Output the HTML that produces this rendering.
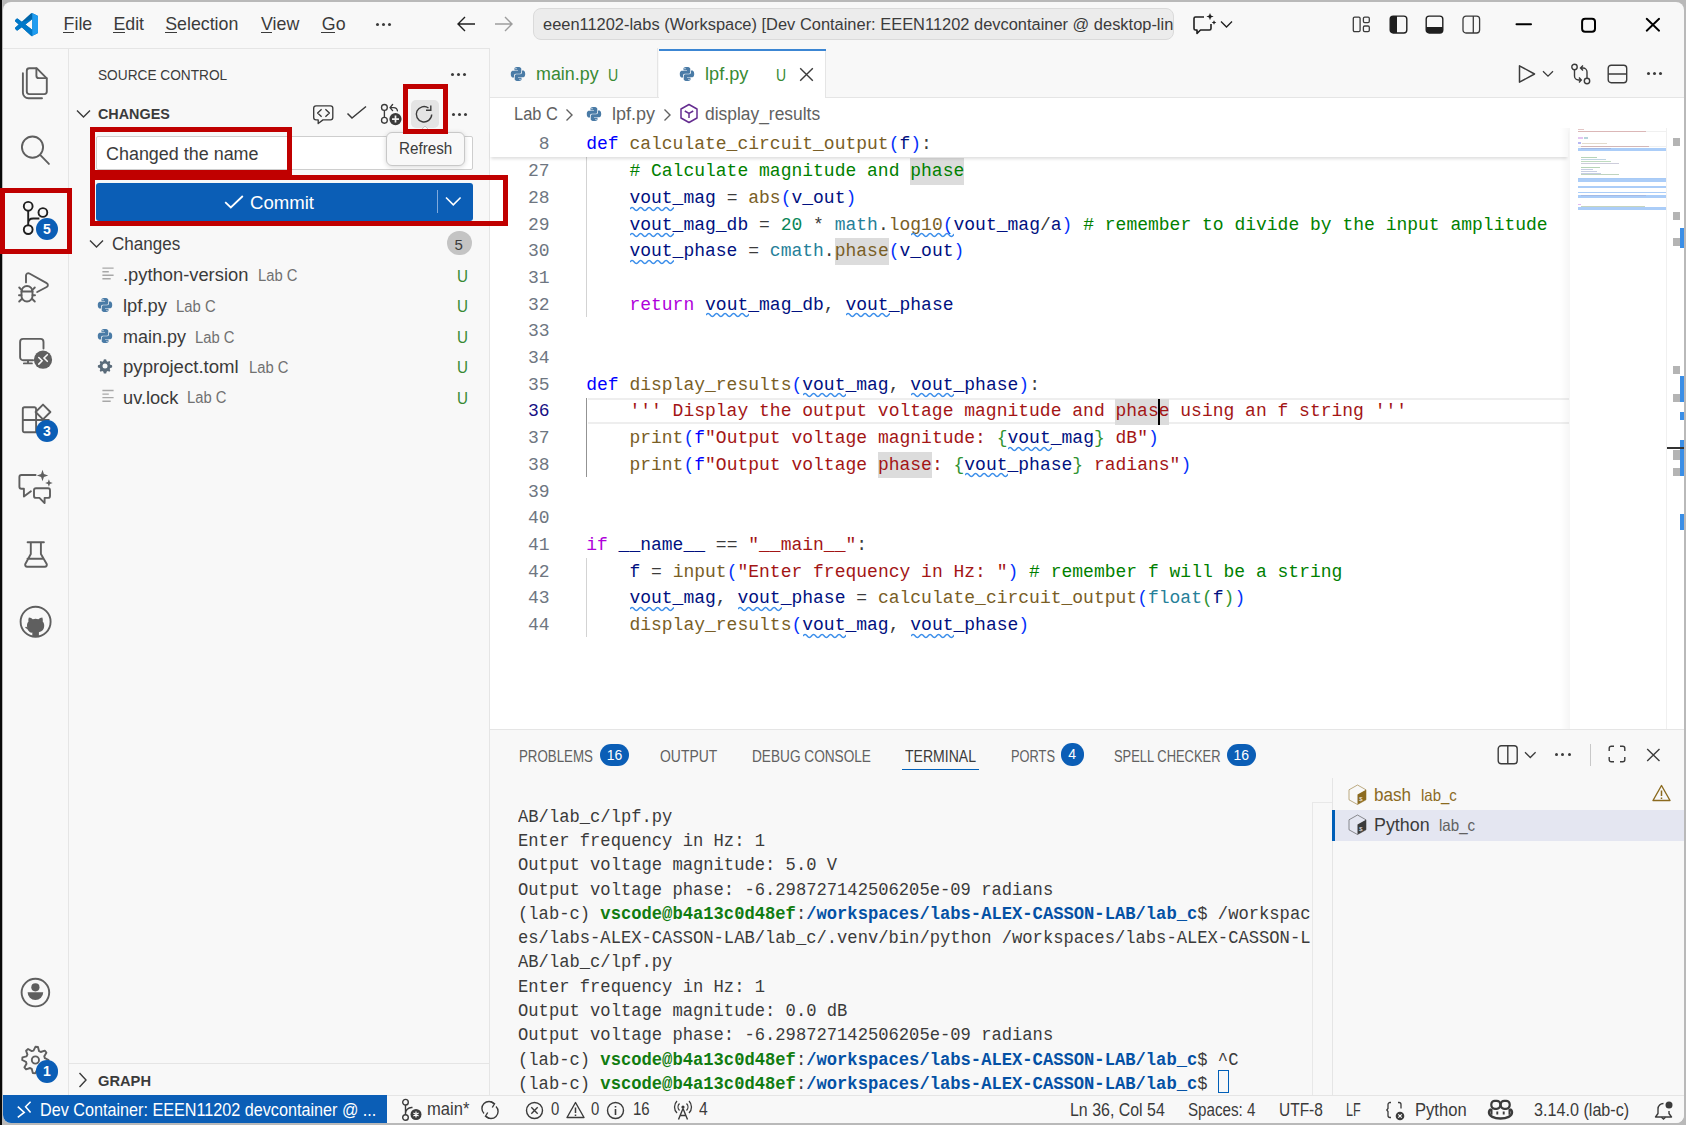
<!DOCTYPE html><html><head><meta charset="utf-8"><style>
*{box-sizing:border-box;margin:0;padding:0}
html,body{width:1686px;height:1125px;overflow:hidden;background:#b9b9b9;font-family:'Liberation Sans', sans-serif;}
.a{position:absolute}
.t{position:absolute;white-space:pre;line-height:1}
.win{position:absolute;left:3px;top:2px;width:1681px;height:1121px;background:#f8f8f8;border-radius:8px;overflow:hidden}
.code{position:absolute;white-space:pre;font-family:'Liberation Mono', monospace;font-size:18px;line-height:26.7px;color:#3b3b3b}
.ln{position:absolute;white-space:pre;font-family:'Liberation Mono', monospace;font-size:18px;line-height:26.7px;color:#6e7681;text-align:right;width:60px;left:490px}
.kw{color:#0000ff} .fn{color:#795e26} .vr{color:#001080} .cm{color:#008000} .st{color:#a31515}
.nu{color:#098658} .ct{color:#af00db} .ty{color:#267f99} .b1{color:#0431fa} .b2{color:#319331}
.hl{background:#dcdcdc}
.sq{text-decoration:underline wavy #1a85ff;text-decoration-thickness:1px;text-underline-offset:4px;text-decoration-skip-ink:none}
.term{position:absolute;white-space:pre;font-family:'Liberation Mono', monospace;font-size:17.15px;line-height:24.27px;color:#3b3b3b;left:518px}
.tg{color:#107c10;font-weight:bold} .tb{color:#0451a5;font-weight:bold}
.ui{font-family:'Liberation Sans', sans-serif;color:#3b3b3b}
.badge{position:absolute;background:#0b5eb6;color:#fff;border-radius:11px;font-family:'Liberation Sans', sans-serif;font-weight:bold;text-align:center}
.red{position:absolute;border:5px solid #c00000;z-index:50}
svg{position:absolute;overflow:visible}
</style></head><body>
<div class="a" style="left:0;top:0;width:2px;height:1125px;background:#0a0a0a"></div>
<div class="win">
<div class="a" style="left:-3px;top:-2px;width:1686px;height:1125px">
<div class="a" style="left:0;top:48px;width:1686px;height:1px;background:#e5e5e5"></div>
<svg style="left:15px;top:12.8px;" width="23" height="23" viewBox="0 0 100 100"><path fill="#0065a9" d="M96.46 10.8 75.86.87a6.23 6.23 0 0 0-7.1 1.21L29.35 38.04 12.19 25.01a4.16 4.16 0 0 0-5.32.24L1.36 30.26a4.17 4.17 0 0 0 0 6.16L16.25 50 1.36 63.58a4.17 4.17 0 0 0 0 6.16l5.51 5.01a4.16 4.16 0 0 0 5.32.24l17.16-13.03 39.41 35.96a6.23 6.23 0 0 0 7.1 1.21l20.6-9.92A6.25 6.25 0 0 0 100 83.59V16.41a6.25 6.25 0 0 0-3.54-5.61zM75.01 72.7 45.11 50l29.9-22.7z"/>
<path fill="#007acc" d="M29.35 38.04 12.19 25.01a4.16 4.16 0 0 0-5.32.24L1.36 30.26a4.17 4.17 0 0 0 0 6.16L16.25 50 1.36 63.58a4.17 4.17 0 0 0 0 6.16l5.51 5.01a4.16 4.16 0 0 0 5.32.24l17.16-13.03 45.66 41.66L75.01 72.7 45.11 50l29.9-22.7z" opacity=".9"/>
<path fill="#1f9cf0" d="M75.86.87a6.23 6.23 0 0 0-7.1 1.21L75 0v100l.86-.87 20.6-9.92A6.25 6.25 0 0 0 100 83.59V16.41a6.25 6.25 0 0 0-3.54-5.61z"/></svg>
<div class="t" style="left:63.60px;top:15.73px;font-size:17.8px;color:#3b3b3b;font-family:'Liberation Sans', sans-serif;">File</div>
<div class="a" style="left:63.1px;top:32px;width:10.9px;height:1.3px;background:#3b3b3b"></div>
<div class="t" style="left:113.40px;top:15.73px;font-size:17.8px;color:#3b3b3b;font-family:'Liberation Sans', sans-serif;">Edit</div>
<div class="a" style="left:112.9px;top:32px;width:11.9px;height:1.3px;background:#3b3b3b"></div>
<div class="t" style="left:165.20px;top:15.73px;font-size:17.8px;color:#3b3b3b;font-family:'Liberation Sans', sans-serif;">Selection</div>
<div class="a" style="left:164.7px;top:32px;width:11.9px;height:1.3px;background:#3b3b3b"></div>
<div class="t" style="left:261.00px;top:15.73px;font-size:17.8px;color:#3b3b3b;font-family:'Liberation Sans', sans-serif;">View</div>
<div class="a" style="left:260.5px;top:32px;width:11.9px;height:1.3px;background:#3b3b3b"></div>
<div class="t" style="left:321.80px;top:15.73px;font-size:17.8px;color:#3b3b3b;font-family:'Liberation Sans', sans-serif;">Go</div>
<div class="a" style="left:321.3px;top:32px;width:13.8px;height:1.3px;background:#3b3b3b"></div>
<div class="a" style="left:375.5px;top:22.5px;width:3px;height:3px;border-radius:50%;background:#3b3b3b"></div>
<div class="a" style="left:381.5px;top:22.5px;width:3px;height:3px;border-radius:50%;background:#3b3b3b"></div>
<div class="a" style="left:387.5px;top:22.5px;width:3px;height:3px;border-radius:50%;background:#3b3b3b"></div>
<svg style="left:457px;top:16px;" width="19" height="16" viewBox="0 0 19 16"><path d="M1 8H18M8 1 1 8l7 7" fill="none" stroke="#1f1f1f" stroke-width="1.4"/></svg>
<svg style="left:493.5px;top:16px;" width="19" height="16" viewBox="0 0 19 16"><path d="M1 8H18M11 1l7 7-7 7" fill="none" stroke="#9d9d9d" stroke-width="1.4"/></svg>
<div class="a" style="left:532.5px;top:7.7px;width:641px;height:32px;background:#ececec;border:1px solid #dadada;border-radius:8px;overflow:hidden">
<div class="t" style="left:9px;top:8.38px;font-size:16.8px;color:#3b3b3b;transform:scaleX(0.9789);transform-origin:0 0">eeen11202-labs (Workspace) [Dev Container: EEEN11202 devcontainer @ desktop-linux]</div>
</div>
<svg style="left:1191px;top:12px;" width="26" height="24" viewBox="0 0 26 24"><path d="M13 5H4.5A1.5 1.5 0 0 0 3 6.5v10A1.5 1.5 0 0 0 4.5 18H6v3.5L9.5 18H18.5A1.5 1.5 0 0 0 20 16.5V12" fill="none" stroke="#1f1f1f" stroke-width="1.6" stroke-linejoin="round"/><path d="M19 1l1 2.6L22.6 4.6 20 5.6 19 8.2 18 5.6 15.4 4.6 18 3.6z M23 8.2l.7 1.6 1.6.7-1.6.7-.7 1.6-.7-1.6-1.6-.7 1.6-.7z" fill="#1f1f1f"/></svg>
<svg style="left:1220px;top:20px;" width="13" height="9" viewBox="0 0 13 9"><path d="M1 1.5l5.5 5.5L12 1.5" fill="none" stroke="#1f1f1f" stroke-width="1.3"/></svg>
<svg style="left:1352px;top:16px;" width="19" height="17" viewBox="0 0 19 17"><rect x="1.3" y="1.1" width="6.8" height="14.5" rx="1.3" fill="none" stroke="#3b3b3b" stroke-width="1.3"/><rect x="11.4" y="1.1" width="5.9" height="5.5" rx="1.3" fill="none" stroke="#3b3b3b" stroke-width="1.3"/><rect x="11.4" y="10" width="5.9" height="5.6" rx="1.3" fill="none" stroke="#3b3b3b" stroke-width="1.3"/></svg>
<svg style="left:1389px;top:15px;" width="19" height="19" viewBox="0 0 19 19"><rect x="1.2" y="1.1" width="16.6" height="16.9" rx="3" fill="none" stroke="#1f1f1f" stroke-width="1.4"/><path d="M4 1.1H8V18H4A2.8 2.8 0 0 1 1.2 15.2V3.9A2.8 2.8 0 0 1 4 1.1z" fill="#1f1f1f"/></svg>
<svg style="left:1425px;top:15px;" width="19" height="19" viewBox="0 0 19 19"><rect x="1.2" y="1.1" width="16.6" height="16.9" rx="3" fill="none" stroke="#1f1f1f" stroke-width="1.4"/><path d="M1.2 12H17.8V15.2A2.8 2.8 0 0 1 15 18H4A2.8 2.8 0 0 1 1.2 15.2z" fill="#1f1f1f"/></svg>
<svg style="left:1462px;top:15px;" width="19" height="19" viewBox="0 0 19 19"><rect x="1" y="1.1" width="16.6" height="16.9" rx="3" fill="none" stroke="#3b3b3b" stroke-width="1.3"/><path d="M11.3 1.1V18" stroke="#3b3b3b" stroke-width="1.3"/></svg>
<svg style="left:1500px;top:0" width="186" height="48"><path d="M1516.5 24.2H1531" transform="translate(-1500,0)" stroke="#000" stroke-width="2" stroke-linecap="round"/><rect x="82.1" y="18.8" width="12.9" height="12.9" rx="3" fill="none" stroke="#000" stroke-width="2"/><path d="M146.7 18.8 159.1 30.7 M159.1 18.8 146.7 30.7" stroke="#000" stroke-width="1.9" stroke-linecap="round"/></svg>
<div class="a" style="left:68px;top:48px;width:1px;height:1047px;background:#e5e5e5"></div>
<svg style="left:0;top:0" width="70" height="1125">
<g fill="none" stroke="#5f5f5f" stroke-width="1.9" stroke-linejoin="round" stroke-linecap="round">
 <path d="M29.3 68.2h7.3l10.2 10.2v13.2a2.5 2.5 0 0 1-2.5 2.5H29.3a2.5 2.5 0 0 1-2.5-2.5V70.7a2.5 2.5 0 0 1 2.5-2.5z"/>
 <path d="M36.4 68.4v7.3a2.4 2.4 0 0 0 2.4 2.4h7.8"/>
 <path d="M22.9 73.2v19.5a5.6 5.6 0 0 0 5.6 5.6h13.5"/>
 <circle cx="32.5" cy="147.1" r="10.6"/>
 <path d="M40.4 155.2 48.9 163.9"/>
</g>
<g fill="none" stroke="#1f1f1f" stroke-width="1.9">
 <circle cx="28.2" cy="206.3" r="4.4"/>
 <circle cx="42.9" cy="212.5" r="4.4"/>
 <circle cx="28.2" cy="229.6" r="4.4"/>
 <path d="M28.2 210.7V225.2 M28.2 223.5c0-3.2 1.8-5 5-5h6.2"/>
</g>
<g fill="none" stroke="#5f5f5f" stroke-width="1.9" stroke-linejoin="round" stroke-linecap="round">
 <path d="M26 282.4V275.5a2.3 2.3 0 0 1 3.4-2l17.3 9.6a2.2 2.2 0 0 1 0 3.9L37.2 292"/>
 <path d="M21.5 291.5a5.5 5.5 0 0 1 11 0"/>
 <path d="M21.5 291.5v4.5a5.5 5.5 0 0 0 11 0v-4.5z"/>
 <path d="M19.2 287.5 22 290.3 M34.8 287.5 32 290.3 M19 295.2h2.5 M32.5 295.2H35 M19.2 301.5 22 298.8 M34.8 301.5 32 298.8"/>
 <path d="M43.5 348.5v-6.6a3 3 0 0 0-3-3H23.1a3 3 0 0 0-3 3v15.3a3 3 0 0 0 3 3h10 M28 360.3v3.1 M23.9 363.4h8"/>
</g>
<circle cx="43" cy="359.7" r="9.1" fill="#5f5f5f"/>
<path d="M38.8 357.5l3.3 3.3-3.3 3.3 M47.3 354.7l-3.3 3.3 3.3 3.3" fill="none" stroke="#f8f8f8" stroke-width="1.6" stroke-linecap="round"/>
<g fill="none" stroke="#5f5f5f" stroke-width="1.9" stroke-linejoin="round" stroke-linecap="round">
 <path d="M24.5 407.3h10a1.7 1.7 0 0 1 1.6 1.7v23.3H24.5a1.7 1.7 0 0 1-1.7-1.7V409a1.7 1.7 0 0 1 1.7-1.7z M22.8 420h26 M36.1 432.3h12"/>
 <path d="M43 404.6l7.4 7.4-7.4 7.4-7.4-7.4z"/>
 <path d="M35.6 475H21.4a2 2 0 0 0-2 2v9.8a2 2 0 0 0 2 2h2.5v7.8l7-5.3"/>
 <path d="M36 488.3h12a2 2 0 0 1 2 2v5.6a2 2 0 0 1-2 2h-3.4v5.2l-5.2-5.2H36a2 2 0 0 1-2-2v-5.6a2 2 0 0 1 2-2z"/>
 <path d="M27.6 542.3h16.3 M30.8 542.3v11.7L25.3 564a2 2 0 0 0 1.8 2.8h17.8a2 2 0 0 0 1.8-2.8L40.9 554V542.3 M27.5 558.8h16.2"/>
 <circle cx="35.6" cy="621.7" r="15"/>
 <circle cx="35.4" cy="992.6" r="13.8"/>
</g>
<path d="M42.5 469.8l1.4 4.3 4.3 1.4-4.3 1.4-1.4 4.3-1.4-4.3-4.3-1.4 4.3-1.4z M48.9 479.2l1 2.8 2.8 1-2.8 1-1 2.8-1-2.8-2.8-1 2.8-1z" fill="#5f5f5f"/>
<path d="M32.3 637v-4.8c-3.1-.6-5.3-2.4-5.3-6.6 0-1.6.6-3 1.5-4-.2-1-.3-2.6.4-4.1 1.6.1 3 .9 3.9 1.8a9.5 9.5 0 0 1 5.6 0c.9-.9 2.3-1.7 3.9-1.8.7 1.5.6 3.1.4 4.1.9 1 1.5 2.4 1.5 4 0 4.2-2.2 6-5.3 6.6V637z" fill="#5f5f5f"/>
<path d="M26 627.5c1.5.3 2.5 1.5 3.2 2.8.7 1.2 1.6 1.8 3 1.5" fill="none" stroke="#5f5f5f" stroke-width="1.5" stroke-linecap="round"/>
<circle cx="35.4" cy="987.3" r="4.1" fill="#5f5f5f"/>
<path d="M27.6 992.3h15.6a7.8 7.8 0 0 1-15.6 0z" fill="#5f5f5f"/>
</svg>
<svg style="left:0;top:0" width="70" height="1125"><polygon points="35.40,1046.80 37.98,1047.05 39.07,1051.13 40.73,1052.02 44.73,1050.67 46.38,1052.67 44.27,1056.33 44.82,1058.13 48.60,1060.00 48.35,1062.58 44.27,1063.67 43.38,1065.33 44.73,1069.33 42.73,1070.98 39.07,1068.87 37.27,1069.42 35.40,1073.20 32.82,1072.95 31.73,1068.87 30.07,1067.98 26.07,1069.33 24.42,1067.33 26.53,1063.67 25.98,1061.87 22.20,1060.00 22.45,1057.42 26.53,1056.33 27.42,1054.67 26.07,1050.67 28.07,1049.02 31.73,1051.13 33.53,1050.58" fill="none" stroke="#5f5f5f" stroke-width="1.9" stroke-linejoin="round"/><circle cx="35.4" cy="1060" r="3.6" fill="none" stroke="#5f5f5f" stroke-width="1.9"/></svg>
<div class="badge" style="left:35.8px;top:217.8px;width:22.4px;height:22.4px;font-size:14px;line-height:22.4px;border-radius:50%;border:0">5</div>
<div class="badge" style="left:35.6px;top:419.5px;width:22.4px;height:22.4px;font-size:14px;line-height:22.4px;border-radius:50%;border:0">3</div>
<div class="badge" style="left:35.7px;top:1060.4px;width:22.4px;height:22.4px;font-size:14px;line-height:22.4px;border-radius:50%;border:0">1</div>
<div class="a" style="left:489px;top:48px;width:1px;height:1047px;background:#e5e5e5"></div>
<div class="t" style="left:97.50px;top:67.48px;font-size:15.5px;color:#3b3b3b;font-family:'Liberation Sans', sans-serif;transform:scaleX(0.8825);transform-origin:0 0;">SOURCE CONTROL</div>
<div class="a" style="left:450.8px;top:72.8px;width:3px;height:3px;border-radius:50%;background:#3b3b3b"></div>
<div class="a" style="left:456.8px;top:72.8px;width:3px;height:3px;border-radius:50%;background:#3b3b3b"></div>
<div class="a" style="left:462.8px;top:72.8px;width:3px;height:3px;border-radius:50%;background:#3b3b3b"></div>
<svg style="left:76px;top:109px;" width="15" height="10" viewBox="0 0 15 10"><path d="M1 1.5l6.5 6.5L14 1.5" fill="none" stroke="#3b3b3b" stroke-width="1.4"/></svg>
<div class="t" style="left:97.50px;top:106.30px;font-size:15px;color:#3b3b3b;font-family:'Liberation Sans', sans-serif;font-weight:bold;transform:scaleX(0.9572);transform-origin:0 0;">CHANGES</div>
<svg style="left:0;top:0" width="500" height="140"><path d="M316 105.8h14.5a2.3 2.3 0 0 1 2.3 2.3v9.5a2.3 2.3 0 0 1-2.3 2.3H323l-4.8 3.6v-3.6H316a2.3 2.3 0 0 1-2.3-2.3v-9.5a2.3 2.3 0 0 1 2.3-2.3z M321.6 109.3 317.6 113l4 3.7 M325.4 109.3l4 3.7-4 3.7" fill="none" stroke="#3b3b3b" stroke-width="1.35" stroke-linejoin="round"/></svg>
<svg style="left:346px;top:105px;" width="22" height="16" viewBox="0 0 22 16"><path d="M1.5 8.5 6 13 20 1.5" fill="none" stroke="#3b3b3b" stroke-width="1.5"/></svg>
<svg style="left:0;top:0" width="500" height="140"><g fill="none" stroke="#3b3b3b" stroke-width="1.35"><circle cx="384.4" cy="107.4" r="2.9"/><circle cx="384.4" cy="120.3" r="2.9"/><path d="M384.4 110.3v7.1"/><path d="M392.6 104.5 390 107.6l2.6 3 M390.3 107.6h3.5a3.6 3.6 0 0 1 3.6 3.2" stroke-linecap="round" stroke-linejoin="round"/></g><circle cx="395.5" cy="119.1" r="6.1" fill="#3b3b3b"/><path d="M395.5 115.6v7 M392 119.1h7" stroke="#f0f0f0" stroke-width="1.7"/></svg>
<div class="a" style="left:411px;top:100px;width:28px;height:28px;border-radius:5px;background:#e4e4e4"></div>
<svg style="left:413px;top:103px;" width="23" height="22" viewBox="0 0 23 22"><path d="M18.7 11.5A7.7 7.7 0 1 1 15.5 5" fill="none" stroke="#3b3b3b" stroke-width="1.4"/><path d="M17.8 2.5v4.8h-4.8" fill="none" stroke="#3b3b3b" stroke-width="1.4"/></svg>
<div class="a" style="left:451.8px;top:112.8px;width:3px;height:3px;border-radius:50%;background:#3b3b3b"></div>
<div class="a" style="left:457.8px;top:112.8px;width:3px;height:3px;border-radius:50%;background:#3b3b3b"></div>
<div class="a" style="left:463.8px;top:112.8px;width:3px;height:3px;border-radius:50%;background:#3b3b3b"></div>
<div class="a" style="left:96px;top:135.7px;width:376.5px;height:34.5px;background:#fff;border:1px solid #cecece;border-radius:2px"></div>
<div class="t" style="left:106.00px;top:145.26px;font-size:18px;color:#3b3b3b;font-family:'Liberation Sans', sans-serif;transform:scaleX(0.9960);transform-origin:0 0;">Changed the name</div>
<div class="a" style="left:96px;top:183px;width:376.5px;height:37.5px;background:#0b5eb6;border-radius:3px"></div>
<div class="a" style="left:437px;top:190px;width:1px;height:23px;background:#7fa9dc"></div>
<svg style="left:445px;top:196px;" width="17" height="11" viewBox="0 0 17 11"><path d="M1 1.5l7.3 7.3L15.6 1.5" fill="none" stroke="#fff" stroke-width="1.6"/></svg>
<svg style="left:224px;top:195px;" width="20" height="14" viewBox="0 0 20 14"><path d="M1.2 7.2 6.8 12.5 18.8 1" fill="none" stroke="#fff" stroke-width="1.8"/></svg>
<div class="t" style="left:250.00px;top:193.84px;font-size:18.5px;color:#ffffff;font-family:'Liberation Sans', sans-serif;transform:scaleX(1.0044);transform-origin:0 0;">Commit</div>
<div class="a" style="left:386px;top:131.6px;width:79px;height:34.7px;background:#f8f8f8;border:1px solid #c8c8c8;border-radius:6px;box-shadow:0 1px 5px rgba(0,0,0,.16)"></div>
<div class="t" style="left:398.70px;top:140.21px;font-size:17px;color:#3b3b3b;font-family:'Liberation Sans', sans-serif;transform:scaleX(0.8954);transform-origin:0 0;">Refresh</div>
<svg style="left:418px;top:125px" width="14" height="8"><path d="M0.5 7.5 7 1l6.5 6.5" fill="#f8f8f8" stroke="#c8c8c8" stroke-width="1"/><rect x="0" y="7" width="14" height="2" fill="#f8f8f8"/></svg>
<svg style="left:89px;top:239px;" width="15" height="10" viewBox="0 0 15 10"><path d="M1 1.5l6.5 6.5L14 1.5" fill="none" stroke="#3b3b3b" stroke-width="1.4"/></svg>
<div class="t" style="left:111.80px;top:234.96px;font-size:18px;color:#3b3b3b;font-family:'Liberation Sans', sans-serif;transform:scaleX(0.9465);transform-origin:0 0;">Changes</div>
<div class="a" style="left:447px;top:231px;width:25px;height:24px;border-radius:12px;background:#c4c4c4"></div>
<div class="t" style="left:454.50px;top:236.80px;font-size:15px;color:#3b3b3b;font-family:'Liberation Sans', sans-serif;">5</div>
<svg style="left:0;top:0" width="130" height="420"><path d="M102.4 268.1h11.2 M102.4 271.7h6.4 M102.4 275.2h11.2 M102.4 278.8h8.3" stroke="#a8a8a8" stroke-width="1.4"/></svg>
<div class="t" style="left:123.00px;top:266.11px;font-size:18.3px;color:#3b3b3b;font-family:'Liberation Sans', sans-serif;transform:scaleX(1.0030);transform-origin:0 0;">.python-version</div>
<div class="t" style="left:257.50px;top:268.05px;font-size:16px;color:#717171;font-family:'Liberation Sans', sans-serif;transform:scaleX(0.9251);transform-origin:0 0;">Lab C</div>
<div class="t" style="left:457.00px;top:267.63px;font-size:16.5px;color:#388a34;font-family:'Liberation Sans', sans-serif;transform:scaleX(0.9231);transform-origin:0 0;">U</div>
<svg style="left:97px;top:297px;" width="16" height="16" viewBox="0 0 16 16"><g transform="scale(1)"><path d="M7.9 1C4.3 1 4.5 2.6 4.5 2.6v1.6h3.5v.5H3.1S.8 4.4.8 8s2 3.5 2 3.5h1.2V9.8s-.1-2 2-2h3.4s1.9 0 1.9-1.9V3S11.6 1 7.9 1zM6 2.1a.6.6 0 1 1 0 1.2.6.6 0 0 1 0-1.2z" fill="#4a7ba6"/><path d="M8.1 15c3.6 0 3.4-1.6 3.4-1.6v-1.6H8v-.5h4.9s2.3.3 2.3-3.3-2-3.5-2-3.5H12v1.7s.1 2-2 2H6.6s-1.9 0-1.9 1.9V13S4.4 15 8.1 15zm1.9-1.1a.6.6 0 1 1 0-1.2.6.6 0 0 1 0 1.2z" fill="#4a7ba6"/></g></svg>
<div class="t" style="left:123.00px;top:296.71px;font-size:18.3px;color:#3b3b3b;font-family:'Liberation Sans', sans-serif;transform:scaleX(1.0037);transform-origin:0 0;">lpf.py</div>
<div class="t" style="left:175.80px;top:298.65px;font-size:16px;color:#717171;font-family:'Liberation Sans', sans-serif;transform:scaleX(0.9275);transform-origin:0 0;">Lab C</div>
<div class="t" style="left:457.00px;top:298.23px;font-size:16.5px;color:#388a34;font-family:'Liberation Sans', sans-serif;transform:scaleX(0.9231);transform-origin:0 0;">U</div>
<svg style="left:97px;top:328px;" width="16" height="16" viewBox="0 0 16 16"><g transform="scale(1)"><path d="M7.9 1C4.3 1 4.5 2.6 4.5 2.6v1.6h3.5v.5H3.1S.8 4.4.8 8s2 3.5 2 3.5h1.2V9.8s-.1-2 2-2h3.4s1.9 0 1.9-1.9V3S11.6 1 7.9 1zM6 2.1a.6.6 0 1 1 0 1.2.6.6 0 0 1 0-1.2z" fill="#4a7ba6"/><path d="M8.1 15c3.6 0 3.4-1.6 3.4-1.6v-1.6H8v-.5h4.9s2.3.3 2.3-3.3-2-3.5-2-3.5H12v1.7s.1 2-2 2H6.6s-1.9 0-1.9 1.9V13S4.4 15 8.1 15zm1.9-1.1a.6.6 0 1 1 0-1.2.6.6 0 0 1 0 1.2z" fill="#4a7ba6"/></g></svg>
<div class="t" style="left:123.00px;top:327.81px;font-size:18.3px;color:#3b3b3b;font-family:'Liberation Sans', sans-serif;transform:scaleX(0.9832);transform-origin:0 0;">main.py</div>
<div class="t" style="left:195.00px;top:329.75px;font-size:16px;color:#717171;font-family:'Liberation Sans', sans-serif;transform:scaleX(0.9251);transform-origin:0 0;">Lab C</div>
<div class="t" style="left:457.00px;top:329.33px;font-size:16.5px;color:#388a34;font-family:'Liberation Sans', sans-serif;transform:scaleX(0.9231);transform-origin:0 0;">U</div>
<svg style="left:97px;top:358px;" width="16" height="16" viewBox="0 0 16 16"><path d="M8 1.2l1.2.2.4 1.7 1.1.6 1.7-.6.9.9-.6 1.7.6 1.1 1.7.4.2 1.2-.2 1.2-1.7.4-.6 1.1.6 1.7-.9.9-1.7-.6-1.1.6-.4 1.7-1.2.2-1.2-.2-.4-1.7-1.1-.6-1.7.6-.9-.9.6-1.7-.6-1.1-1.7-.4L.8 8.4 1 7.2l1.7-.4.6-1.1-.6-1.7.9-.9 1.7.6 1.1-.6.4-1.7z" fill="#5a6b7a"/><circle cx="8" cy="8" r="2.5" fill="#f8f8f8"/></svg>
<div class="t" style="left:123.00px;top:357.91px;font-size:18.3px;color:#3b3b3b;font-family:'Liberation Sans', sans-serif;transform:scaleX(1.0166);transform-origin:0 0;">pyproject.toml</div>
<div class="t" style="left:248.50px;top:359.85px;font-size:16px;color:#717171;font-family:'Liberation Sans', sans-serif;transform:scaleX(0.9251);transform-origin:0 0;">Lab C</div>
<div class="t" style="left:457.00px;top:359.43px;font-size:16.5px;color:#388a34;font-family:'Liberation Sans', sans-serif;transform:scaleX(0.9231);transform-origin:0 0;">U</div>
<svg style="left:0;top:0" width="130" height="420"><path d="M102.4 390.5h11.2 M102.4 394.1h6.4 M102.4 397.6h11.2 M102.4 401.2h8.3" stroke="#a8a8a8" stroke-width="1.4"/></svg>
<div class="t" style="left:123.00px;top:388.51px;font-size:18.3px;color:#3b3b3b;font-family:'Liberation Sans', sans-serif;transform:scaleX(0.9964);transform-origin:0 0;">uv.lock</div>
<div class="t" style="left:187.30px;top:390.45px;font-size:16px;color:#717171;font-family:'Liberation Sans', sans-serif;transform:scaleX(0.9251);transform-origin:0 0;">Lab C</div>
<div class="t" style="left:457.00px;top:390.03px;font-size:16.5px;color:#388a34;font-family:'Liberation Sans', sans-serif;transform:scaleX(0.9231);transform-origin:0 0;">U</div>
<div class="a" style="left:69px;top:1063px;width:420px;height:1px;background:#e5e5e5"></div>
<svg style="left:78px;top:1072px;" width="10" height="16" viewBox="0 0 10 16"><path d="M1.5 1l6.5 7-6.5 7" fill="none" stroke="#3b3b3b" stroke-width="1.4"/></svg>
<div class="t" style="left:97.50px;top:1072.80px;font-size:15px;color:#3b3b3b;font-family:'Liberation Sans', sans-serif;font-weight:bold;transform:scaleX(0.9784);transform-origin:0 0;">GRAPH</div>
<div class="a" style="left:490px;top:97px;width:1194px;height:632px;background:#ffffff"></div>
<div class="a" style="left:490px;top:48px;width:1194px;height:49px;background:#f8f8f8"></div>
<div class="a" style="left:490px;top:97px;width:1194px;height:1px;background:#e5e5e5"></div>
<div class="a" style="left:490px;top:48px;width:168px;height:49px;background:#f8f8f8;border-right:1px solid #e5e5e5"></div>
<div class="a" style="left:658.7px;top:48.5px;width:167.5px;height:49.5px;background:#ffffff;border-right:1px solid #e5e5e5"></div>
<div class="a" style="left:658.7px;top:49.2px;width:167.5px;height:1.6px;background:#3c86d3"></div>
<svg style="left:510px;top:66px;" width="16" height="16" viewBox="0 0 16 16"><g transform="scale(1)"><path d="M7.9 1C4.3 1 4.5 2.6 4.5 2.6v1.6h3.5v.5H3.1S.8 4.4.8 8s2 3.5 2 3.5h1.2V9.8s-.1-2 2-2h3.4s1.9 0 1.9-1.9V3S11.6 1 7.9 1zM6 2.1a.6.6 0 1 1 0 1.2.6.6 0 0 1 0-1.2z" fill="#4a7ba6"/><path d="M8.1 15c3.6 0 3.4-1.6 3.4-1.6v-1.6H8v-.5h4.9s2.3.3 2.3-3.3-2-3.5-2-3.5H12v1.7s.1 2-2 2H6.6s-1.9 0-1.9 1.9V13S4.4 15 8.1 15zm1.9-1.1a.6.6 0 1 1 0-1.2.6.6 0 0 1 0 1.2z" fill="#4a7ba6"/></g></svg>
<div class="t" style="left:535.90px;top:65.36px;font-size:18px;color:#388a34;font-family:'Liberation Sans', sans-serif;transform:scaleX(0.9932);transform-origin:0 0;">main.py</div>
<div class="t" style="left:607.80px;top:66.63px;font-size:16.5px;color:#388a34;font-family:'Liberation Sans', sans-serif;transform:scaleX(0.8560);transform-origin:0 0;">U</div>
<svg style="left:679px;top:66px;" width="16" height="16" viewBox="0 0 16 16"><g transform="scale(1)"><path d="M7.9 1C4.3 1 4.5 2.6 4.5 2.6v1.6h3.5v.5H3.1S.8 4.4.8 8s2 3.5 2 3.5h1.2V9.8s-.1-2 2-2h3.4s1.9 0 1.9-1.9V3S11.6 1 7.9 1zM6 2.1a.6.6 0 1 1 0 1.2.6.6 0 0 1 0-1.2z" fill="#4a7ba6"/><path d="M8.1 15c3.6 0 3.4-1.6 3.4-1.6v-1.6H8v-.5h4.9s2.3.3 2.3-3.3-2-3.5-2-3.5H12v1.7s.1 2-2 2H6.6s-1.9 0-1.9 1.9V13S4.4 15 8.1 15zm1.9-1.1a.6.6 0 1 1 0-1.2.6.6 0 0 1 0 1.2z" fill="#4a7ba6"/></g></svg>
<div class="t" style="left:704.60px;top:65.36px;font-size:18px;color:#388a34;font-family:'Liberation Sans', sans-serif;transform:scaleX(1.0088);transform-origin:0 0;">lpf.py</div>
<div class="t" style="left:776.40px;top:66.63px;font-size:16.5px;color:#388a34;font-family:'Liberation Sans', sans-serif;transform:scaleX(0.8476);transform-origin:0 0;">U</div>
<svg style="left:799px;top:67px;" width="15" height="15" viewBox="0 0 15 15"><path d="M1.2 1.2 13.8 13.8M13.8 1.2 1.2 13.8" stroke="#3b3b3b" stroke-width="1.4"/></svg>
<svg style="left:1517px;top:64px;" width="20" height="20" viewBox="0 0 20 20"><path d="M2.5 1.8 17.5 10 2.5 18.2z" fill="none" stroke="#3b3b3b" stroke-width="1.5" stroke-linejoin="round"/></svg>
<svg style="left:1542px;top:70px;" width="12" height="8" viewBox="0 0 12 8"><path d="M1 1.2l5 5 5-5" fill="none" stroke="#3b3b3b" stroke-width="1.3"/></svg>
<svg style="left:1570px;top:63px;" width="22" height="22" viewBox="0 0 22 22"><circle cx="4.5" cy="4" r="2.7" fill="none" stroke="#3b3b3b" stroke-width="1.4"/><circle cx="17" cy="18" r="2.7" fill="none" stroke="#3b3b3b" stroke-width="1.4"/><path d="M4.5 6.7V13a4 4 0 0 0 4 4H11 M9 14.5l2.3 2.5L9 19.5 M17 15.3V9a4 4 0 0 0-4-4h-2.5 M13 2.5 10.5 5 13 7.5" fill="none" stroke="#3b3b3b" stroke-width="1.4"/></svg>
<svg style="left:1607px;top:64px;" width="21" height="20" viewBox="0 0 21 20"><rect x="1.2" y="1.2" width="18.5" height="17.5" rx="3" fill="none" stroke="#3b3b3b" stroke-width="1.4"/><path d="M1.2 10h18.5" stroke="#3b3b3b" stroke-width="1.4"/></svg>
<div class="a" style="left:1646.8px;top:72.3px;width:3px;height:3px;border-radius:50%;background:#3b3b3b"></div>
<div class="a" style="left:1652.8px;top:72.3px;width:3px;height:3px;border-radius:50%;background:#3b3b3b"></div>
<div class="a" style="left:1658.8px;top:72.3px;width:3px;height:3px;border-radius:50%;background:#3b3b3b"></div>
<div class="t" style="left:513.70px;top:104.96px;font-size:18px;color:#616161;font-family:'Liberation Sans', sans-serif;transform:scaleX(0.9119);transform-origin:0 0;">Lab C</div>
<svg style="left:565px;top:108px;" width="9" height="14" viewBox="0 0 9 14"><path d="M1.5 1.5 7 7l-5.5 5.5" fill="none" stroke="#616161" stroke-width="1.4"/></svg>
<svg style="left:586px;top:106px;" width="16" height="16" viewBox="0 0 16 16"><g transform="scale(1)"><path d="M7.9 1C4.3 1 4.5 2.6 4.5 2.6v1.6h3.5v.5H3.1S.8 4.4.8 8s2 3.5 2 3.5h1.2V9.8s-.1-2 2-2h3.4s1.9 0 1.9-1.9V3S11.6 1 7.9 1zM6 2.1a.6.6 0 1 1 0 1.2.6.6 0 0 1 0-1.2z" fill="#4a7ba6"/><path d="M8.1 15c3.6 0 3.4-1.6 3.4-1.6v-1.6H8v-.5h4.9s2.3.3 2.3-3.3-2-3.5-2-3.5H12v1.7s.1 2-2 2H6.6s-1.9 0-1.9 1.9V13S4.4 15 8.1 15zm1.9-1.1a.6.6 0 1 1 0-1.2.6.6 0 0 1 0 1.2z" fill="#4a7ba6"/></g></svg>
<div class="t" style="left:612.00px;top:104.96px;font-size:18px;color:#616161;font-family:'Liberation Sans', sans-serif;transform:scaleX(0.9995);transform-origin:0 0;">lpf.py</div>
<svg style="left:663px;top:108px;" width="9" height="14" viewBox="0 0 9 14"><path d="M1.5 1.5 7 7l-5.5 5.5" fill="none" stroke="#616161" stroke-width="1.4"/></svg>
<svg style="left:679px;top:103px;" width="21" height="21" viewBox="0 0 21 21"><path d="M10 1.5l8 4.5v9l-8 4.5-8-4.5V6z" fill="none" stroke="#652d90" stroke-width="1.5" stroke-linejoin="round"/><path d="M5.8 8 10 10.5 14.2 8 M10 10.5V15" fill="none" stroke="#652d90" stroke-width="1.5"/></svg>
<div class="t" style="left:705.20px;top:105.06px;font-size:18px;color:#616161;font-family:'Liberation Sans', sans-serif;transform:scaleX(0.9667);transform-origin:0 0;">display_results</div>
<div class="a" style="left:587.5px;top:398.4px;width:981px;height:25.3px;border-top:2px solid #eeeeee;border-bottom:2px solid #eeeeee"></div>
<div class="a" style="left:910.2px;top:158.3px;width:54.0px;height:26.7px;background:#dcdcdc"></div>
<div class="a" style="left:834.6px;top:238.4px;width:54.0px;height:26.7px;background:#dcdcdc"></div>
<div class="a" style="left:1115.4px;top:398.5px;width:54.0px;height:26.7px;background:#dcdcdc"></div>
<div class="a" style="left:877.8px;top:451.8px;width:54.0px;height:26.7px;background:#dcdcdc"></div>
<div class="a" style="left:586px;top:157.0px;width:1px;height:159.6px;background:#d3d3d3"></div>
<div class="a" style="left:586px;top:397.7px;width:1px;height:79.0px;background:#939393"></div>
<div class="a" style="left:586px;top:557.7px;width:1px;height:79.0px;background:#d3d3d3"></div>
<div class="ln" style="top:158.34px;width:59.5px;color:#6e7681">27</div>
<div class="code" style="left:586.2px;top:158.34px">    <span class="cm"># Calculate magnitude and phase</span></div>
<div class="ln" style="top:185.02px;width:59.5px;color:#6e7681">28</div>
<div class="code" style="left:586.2px;top:185.02px">    <span class="vr">vout_mag</span> = <span class="fn">abs</span><span class="b1">(</span><span class="vr">v_out</span><span class="b1">)</span></div>
<svg style="left:629.9px;top:205.6px;overflow:hidden" width="43.7" height="6" viewBox="0 0 43.7 6"><path d="M0 3 Q2.12 0.00 4.25 3 Q6.38 6.00 8.50 3 Q10.62 0.00 12.75 3 Q14.88 6.00 17.00 3 Q19.12 0.00 21.25 3 Q23.38 6.00 25.50 3 Q27.62 0.00 29.75 3 Q31.88 6.00 34.00 3 Q36.12 0.00 38.25 3 Q40.38 6.00 42.50 3 Q44.62 0.00 46.75 3" fill="none" stroke="#3b8eea" stroke-width="1.4"/></svg>
<div class="ln" style="top:211.70px;width:59.5px;color:#6e7681">29</div>
<div class="code" style="left:586.2px;top:211.70px">    <span class="vr">vout_mag_db</span> = <span class="nu">20</span> * <span class="ty">math</span>.<span class="fn">log10</span><span class="b1">(</span><span class="vr">vout_mag</span>/<span class="vr">a</span><span class="b1">)</span><span class="cm"> # remember to divide by the input amplitude</span></div>
<svg style="left:629.9px;top:232.3px;overflow:hidden" width="43.7" height="6" viewBox="0 0 43.7 6"><path d="M0 3 Q2.12 0.00 4.25 3 Q6.38 6.00 8.50 3 Q10.62 0.00 12.75 3 Q14.88 6.00 17.00 3 Q19.12 0.00 21.25 3 Q23.38 6.00 25.50 3 Q27.62 0.00 29.75 3 Q31.88 6.00 34.00 3 Q36.12 0.00 38.25 3 Q40.38 6.00 42.50 3 Q44.62 0.00 46.75 3" fill="none" stroke="#3b8eea" stroke-width="1.4"/></svg>
<svg style="left:910.7px;top:232.3px;overflow:hidden" width="43.7" height="6" viewBox="0 0 43.7 6"><path d="M0 3 Q2.12 0.00 4.25 3 Q6.38 6.00 8.50 3 Q10.62 0.00 12.75 3 Q14.88 6.00 17.00 3 Q19.12 0.00 21.25 3 Q23.38 6.00 25.50 3 Q27.62 0.00 29.75 3 Q31.88 6.00 34.00 3 Q36.12 0.00 38.25 3 Q40.38 6.00 42.50 3 Q44.62 0.00 46.75 3" fill="none" stroke="#3b8eea" stroke-width="1.4"/></svg>
<div class="ln" style="top:238.38px;width:59.5px;color:#6e7681">30</div>
<div class="code" style="left:586.2px;top:238.38px">    <span class="vr">vout_phase</span> = <span class="ty">cmath</span>.<span class="fn">phase</span><span class="b1">(</span><span class="vr">v_out</span><span class="b1">)</span></div>
<svg style="left:629.9px;top:258.9px;overflow:hidden" width="43.7" height="6" viewBox="0 0 43.7 6"><path d="M0 3 Q2.12 0.00 4.25 3 Q6.38 6.00 8.50 3 Q10.62 0.00 12.75 3 Q14.88 6.00 17.00 3 Q19.12 0.00 21.25 3 Q23.38 6.00 25.50 3 Q27.62 0.00 29.75 3 Q31.88 6.00 34.00 3 Q36.12 0.00 38.25 3 Q40.38 6.00 42.50 3 Q44.62 0.00 46.75 3" fill="none" stroke="#3b8eea" stroke-width="1.4"/></svg>
<div class="ln" style="top:265.06px;width:59.5px;color:#6e7681">31</div>
<div class="ln" style="top:291.74px;width:59.5px;color:#6e7681">32</div>
<div class="code" style="left:586.2px;top:291.74px">    <span class="ct">return</span> <span class="vr">vout_mag_db</span>, <span class="vr">vout_phase</span></div>
<svg style="left:705.5px;top:312.3px;overflow:hidden" width="43.7" height="6" viewBox="0 0 43.7 6"><path d="M0 3 Q2.12 0.00 4.25 3 Q6.38 6.00 8.50 3 Q10.62 0.00 12.75 3 Q14.88 6.00 17.00 3 Q19.12 0.00 21.25 3 Q23.38 6.00 25.50 3 Q27.62 0.00 29.75 3 Q31.88 6.00 34.00 3 Q36.12 0.00 38.25 3 Q40.38 6.00 42.50 3 Q44.62 0.00 46.75 3" fill="none" stroke="#3b8eea" stroke-width="1.4"/></svg>
<svg style="left:845.9px;top:312.3px;overflow:hidden" width="43.7" height="6" viewBox="0 0 43.7 6"><path d="M0 3 Q2.12 0.00 4.25 3 Q6.38 6.00 8.50 3 Q10.62 0.00 12.75 3 Q14.88 6.00 17.00 3 Q19.12 0.00 21.25 3 Q23.38 6.00 25.50 3 Q27.62 0.00 29.75 3 Q31.88 6.00 34.00 3 Q36.12 0.00 38.25 3 Q40.38 6.00 42.50 3 Q44.62 0.00 46.75 3" fill="none" stroke="#3b8eea" stroke-width="1.4"/></svg>
<div class="ln" style="top:318.42px;width:59.5px;color:#6e7681">33</div>
<div class="ln" style="top:345.10px;width:59.5px;color:#6e7681">34</div>
<div class="ln" style="top:371.78px;width:59.5px;color:#6e7681">35</div>
<div class="code" style="left:586.2px;top:371.78px"><span class="kw">def</span> <span class="fn">display_results</span><span class="b1">(</span><span class="vr">vout_mag</span>, <span class="vr">vout_phase</span><span class="b1">)</span>:</div>
<svg style="left:802.7px;top:392.3px;overflow:hidden" width="43.7" height="6" viewBox="0 0 43.7 6"><path d="M0 3 Q2.12 0.00 4.25 3 Q6.38 6.00 8.50 3 Q10.62 0.00 12.75 3 Q14.88 6.00 17.00 3 Q19.12 0.00 21.25 3 Q23.38 6.00 25.50 3 Q27.62 0.00 29.75 3 Q31.88 6.00 34.00 3 Q36.12 0.00 38.25 3 Q40.38 6.00 42.50 3 Q44.62 0.00 46.75 3" fill="none" stroke="#3b8eea" stroke-width="1.4"/></svg>
<svg style="left:910.7px;top:392.3px;overflow:hidden" width="43.7" height="6" viewBox="0 0 43.7 6"><path d="M0 3 Q2.12 0.00 4.25 3 Q6.38 6.00 8.50 3 Q10.62 0.00 12.75 3 Q14.88 6.00 17.00 3 Q19.12 0.00 21.25 3 Q23.38 6.00 25.50 3 Q27.62 0.00 29.75 3 Q31.88 6.00 34.00 3 Q36.12 0.00 38.25 3 Q40.38 6.00 42.50 3 Q44.62 0.00 46.75 3" fill="none" stroke="#3b8eea" stroke-width="1.4"/></svg>
<div class="ln" style="top:398.46px;width:59.5px;color:#171184">36</div>
<div class="code" style="left:586.2px;top:398.46px">    <span class="st">&#x27;&#x27;&#x27; Display the output voltage magnitude and phase using an f string &#x27;&#x27;&#x27;</span></div>
<div class="ln" style="top:425.14px;width:59.5px;color:#6e7681">37</div>
<div class="code" style="left:586.2px;top:425.14px">    <span class="fn">print</span><span class="b1">(</span><span class="kw">f</span><span class="st">&quot;Output voltage magnitude: </span><span class="b2">{</span><span class="vr">vout_mag</span><span class="b2">}</span><span class="st"> dB&quot;</span><span class="b1">)</span></div>
<svg style="left:1007.9px;top:445.7px;overflow:hidden" width="43.7" height="6" viewBox="0 0 43.7 6"><path d="M0 3 Q2.12 0.00 4.25 3 Q6.38 6.00 8.50 3 Q10.62 0.00 12.75 3 Q14.88 6.00 17.00 3 Q19.12 0.00 21.25 3 Q23.38 6.00 25.50 3 Q27.62 0.00 29.75 3 Q31.88 6.00 34.00 3 Q36.12 0.00 38.25 3 Q40.38 6.00 42.50 3 Q44.62 0.00 46.75 3" fill="none" stroke="#3b8eea" stroke-width="1.4"/></svg>
<div class="ln" style="top:451.82px;width:59.5px;color:#6e7681">38</div>
<div class="code" style="left:586.2px;top:451.82px">    <span class="fn">print</span><span class="b1">(</span><span class="kw">f</span><span class="st">&quot;Output voltage phase: </span><span class="b2">{</span><span class="vr">vout_phase</span><span class="b2">}</span><span class="st"> radians&quot;</span><span class="b1">)</span></div>
<svg style="left:964.7px;top:472.4px;overflow:hidden" width="43.7" height="6" viewBox="0 0 43.7 6"><path d="M0 3 Q2.12 0.00 4.25 3 Q6.38 6.00 8.50 3 Q10.62 0.00 12.75 3 Q14.88 6.00 17.00 3 Q19.12 0.00 21.25 3 Q23.38 6.00 25.50 3 Q27.62 0.00 29.75 3 Q31.88 6.00 34.00 3 Q36.12 0.00 38.25 3 Q40.38 6.00 42.50 3 Q44.62 0.00 46.75 3" fill="none" stroke="#3b8eea" stroke-width="1.4"/></svg>
<div class="ln" style="top:478.50px;width:59.5px;color:#6e7681">39</div>
<div class="ln" style="top:505.18px;width:59.5px;color:#6e7681">40</div>
<div class="ln" style="top:531.86px;width:59.5px;color:#6e7681">41</div>
<div class="code" style="left:586.2px;top:531.86px"><span class="ct">if</span> <span class="vr">__name__</span> == <span class="st">&quot;__main__&quot;</span>:</div>
<div class="ln" style="top:558.54px;width:59.5px;color:#6e7681">42</div>
<div class="code" style="left:586.2px;top:558.54px">    <span class="vr">f</span> = <span class="fn">input</span><span class="b1">(</span><span class="st">&quot;Enter frequency in Hz: &quot;</span><span class="b1">)</span><span class="cm"> # remember f will be a string</span></div>
<div class="ln" style="top:585.22px;width:59.5px;color:#6e7681">43</div>
<div class="code" style="left:586.2px;top:585.22px">    <span class="vr">vout_mag</span>, <span class="vr">vout_phase</span> = <span class="fn">calculate_circuit_output</span><span class="b1">(</span><span class="ty">float</span><span class="b2">(</span><span class="vr">f</span><span class="b2">)</span><span class="b1">)</span></div>
<svg style="left:629.9px;top:605.8px;overflow:hidden" width="43.7" height="6" viewBox="0 0 43.7 6"><path d="M0 3 Q2.12 0.00 4.25 3 Q6.38 6.00 8.50 3 Q10.62 0.00 12.75 3 Q14.88 6.00 17.00 3 Q19.12 0.00 21.25 3 Q23.38 6.00 25.50 3 Q27.62 0.00 29.75 3 Q31.88 6.00 34.00 3 Q36.12 0.00 38.25 3 Q40.38 6.00 42.50 3 Q44.62 0.00 46.75 3" fill="none" stroke="#3b8eea" stroke-width="1.4"/></svg>
<svg style="left:737.9px;top:605.8px;overflow:hidden" width="43.7" height="6" viewBox="0 0 43.7 6"><path d="M0 3 Q2.12 0.00 4.25 3 Q6.38 6.00 8.50 3 Q10.62 0.00 12.75 3 Q14.88 6.00 17.00 3 Q19.12 0.00 21.25 3 Q23.38 6.00 25.50 3 Q27.62 0.00 29.75 3 Q31.88 6.00 34.00 3 Q36.12 0.00 38.25 3 Q40.38 6.00 42.50 3 Q44.62 0.00 46.75 3" fill="none" stroke="#3b8eea" stroke-width="1.4"/></svg>
<div class="ln" style="top:611.90px;width:59.5px;color:#6e7681">44</div>
<div class="code" style="left:586.2px;top:611.90px">    <span class="fn">display_results</span><span class="b1">(</span><span class="vr">vout_mag</span>, <span class="vr">vout_phase</span><span class="b1">)</span></div>
<svg style="left:802.7px;top:632.5px;overflow:hidden" width="43.7" height="6" viewBox="0 0 43.7 6"><path d="M0 3 Q2.12 0.00 4.25 3 Q6.38 6.00 8.50 3 Q10.62 0.00 12.75 3 Q14.88 6.00 17.00 3 Q19.12 0.00 21.25 3 Q23.38 6.00 25.50 3 Q27.62 0.00 29.75 3 Q31.88 6.00 34.00 3 Q36.12 0.00 38.25 3 Q40.38 6.00 42.50 3 Q44.62 0.00 46.75 3" fill="none" stroke="#3b8eea" stroke-width="1.4"/></svg>
<svg style="left:910.7px;top:632.5px;overflow:hidden" width="43.7" height="6" viewBox="0 0 43.7 6"><path d="M0 3 Q2.12 0.00 4.25 3 Q6.38 6.00 8.50 3 Q10.62 0.00 12.75 3 Q14.88 6.00 17.00 3 Q19.12 0.00 21.25 3 Q23.38 6.00 25.50 3 Q27.62 0.00 29.75 3 Q31.88 6.00 34.00 3 Q36.12 0.00 38.25 3 Q40.38 6.00 42.50 3 Q44.62 0.00 46.75 3" fill="none" stroke="#3b8eea" stroke-width="1.4"/></svg>
<div class="a" style="left:1157.6px;top:399.0px;width:2px;height:25.7px;background:#000"></div>
<div class="a" style="left:490px;top:128px;width:1078px;height:29px;background:#fff;box-shadow:0 3px 3px -1px rgba(0,0,0,0.13)"></div>
<div class="ln" style="top:130.84px;width:59.5px">8</div>
<div class="code" style="left:586.2px;top:130.84px"><span class="kw">def</span> <span class="fn">calculate_circuit_output</span><span class="b1">(</span><span class="vr">f</span><span class="b1">)</span>:</div>
<div class="a" style="left:1560px;top:128px;width:10px;height:601px;background:linear-gradient(to right, rgba(0,0,0,0), rgba(0,0,0,0.04))"></div>
<div class="a" style="left:1578px;top:128.9px;width:6px;height:0.8px;background:#c08080;opacity:0.45"></div>
<div class="a" style="left:1578px;top:131.2px;width:68px;height:1.0px;background:#b06060;opacity:0.45"></div>
<div class="a" style="left:1646px;top:131.2px;width:20px;height:1.0px;background:#dddddd;opacity:0.45"></div>
<div class="a" style="left:1578px;top:136.6px;width:5px;height:2.0px;background:#c080e0;opacity:0.45"></div>
<div class="a" style="left:1584px;top:136.6px;width:4px;height:2.0px;background:#60a0b0;opacity:0.45"></div>
<div class="a" style="left:1578px;top:142.4px;width:3px;height:1.2px;background:#6060e0;opacity:0.45"></div>
<div class="a" style="left:1582px;top:142.5px;width:25px;height:1.0px;background:#c0b090;opacity:0.45"></div>
<div class="a" style="left:1578px;top:146.0px;width:88px;height:0.8px;background:#dddddd;opacity:0.45"></div>
<div class="a" style="left:1581px;top:146.0px;width:68px;height:0.8px;background:#b07070;opacity:0.45"></div>
<div class="a" style="left:1581px;top:147.9px;width:30px;height:0.8px;background:#c05050;opacity:0.45"></div>
<div class="a" style="left:1577.5px;top:148.3px;width:88.5px;height:3.0px;background:#8fbcf5;opacity:0.75"></div>
<div class="a" style="left:1581px;top:157.2px;width:16px;height:0.8px;background:#60a060;opacity:0.45"></div>
<div class="a" style="left:1581px;top:159.0px;width:25px;height:1.0px;background:#70a0c0;opacity:0.45"></div>
<div class="a" style="left:1581px;top:161.0px;width:30px;height:1.0px;background:#70b070;opacity:0.45"></div>
<div class="a" style="left:1581px;top:163.0px;width:38px;height:1.0px;background:#9090b0;opacity:0.45"></div>
<div class="a" style="left:1581px;top:166.6px;width:19px;height:0.8px;background:#60a060;opacity:0.45"></div>
<div class="a" style="left:1581px;top:168.6px;width:12px;height:0.8px;background:#8090c0;opacity:0.45"></div>
<div class="a" style="left:1581px;top:170.6px;width:16px;height:0.8px;background:#8090c0;opacity:0.45"></div>
<div class="a" style="left:1581px;top:172.6px;width:20px;height:0.8px;background:#8090c0;opacity:0.45"></div>
<div class="a" style="left:1581px;top:174.3px;width:38px;height:0.8px;background:#70a070;opacity:0.45"></div>
<div class="a" style="left:1578px;top:178.1px;width:88px;height:0.8px;background:#e6e6e6;opacity:0.45"></div>
<div class="a" style="left:1577.5px;top:177.8px;width:88.5px;height:4.5px;background:#8fbcf5;opacity:0.75"></div>
<div class="a" style="left:1577.5px;top:186.2px;width:88.5px;height:1.6px;background:#8fbcf5;opacity:0.75"></div>
<div class="a" style="left:1577.5px;top:192.2px;width:88.5px;height:1.2px;background:#8fbcf5;opacity:0.75"></div>
<div class="a" style="left:1581px;top:194.8px;width:65px;height:1.0px;background:#c06060;opacity:0.45"></div>
<div class="a" style="left:1577.5px;top:195.2px;width:88.5px;height:3.0px;background:#8fbcf5;opacity:0.75"></div>
<div class="a" style="left:1578px;top:203.5px;width:3px;height:1.0px;background:#c060e0;opacity:0.45"></div>
<div class="a" style="left:1581px;top:206.0px;width:64px;height:1.0px;background:#80a070;opacity:0.45"></div>
<div class="a" style="left:1577.5px;top:206.5px;width:88.5px;height:3.0px;background:#8fbcf5;opacity:0.75"></div>
<div class="a" style="left:1666px;top:128px;width:1px;height:601px;background:#f0f0f0"></div>
<div class="a" style="left:1673px;top:138px;width:7px;height:8px;background:#b4b4b4"></div>
<div class="a" style="left:1673px;top:212px;width:7px;height:8px;background:#b4b4b4"></div>
<div class="a" style="left:1673px;top:238px;width:7px;height:8px;background:#b4b4b4"></div>
<div class="a" style="left:1673px;top:366px;width:7px;height:8px;background:#b4b4b4"></div>
<div class="a" style="left:1673px;top:394px;width:7px;height:8px;background:#b4b4b4"></div>
<div class="a" style="left:1673px;top:450px;width:7px;height:10px;background:#b4b4b4"></div>
<div class="a" style="left:1673px;top:468px;width:7px;height:8px;background:#b4b4b4"></div>
<div class="a" style="left:1680px;top:228px;width:4px;height:20px;background:#3a8ee6"></div>
<div class="a" style="left:1680px;top:376px;width:4px;height:26px;background:#3a8ee6"></div>
<div class="a" style="left:1680px;top:412px;width:4px;height:8px;background:#3a8ee6"></div>
<div class="a" style="left:1680px;top:440px;width:4px;height:20px;background:#3a8ee6"></div>
<div class="a" style="left:1680px;top:458px;width:4px;height:18px;background:#3a8ee6"></div>
<div class="a" style="left:1680px;top:514px;width:4px;height:16px;background:#3a8ee6"></div>
<div class="a" style="left:1667px;top:447px;width:17px;height:2px;background:#333"></div>
<div class="a" style="left:490px;top:729px;width:1194px;height:366px;background:#f8f8f8;border-top:1px solid #e5e5e5"></div>
<div class="t" style="left:519.00px;top:748.40px;font-size:16.3px;color:#616161;font-family:'Liberation Sans', sans-serif;transform:scaleX(0.8169);transform-origin:0 0;">PROBLEMS</div>
<div class="badge" style="left:600px;top:743.5px;width:29px;height:22px;font-size:14px;line-height:22px;font-weight:normal">16</div>
<div class="t" style="left:659.60px;top:748.40px;font-size:16.3px;color:#616161;font-family:'Liberation Sans', sans-serif;transform:scaleX(0.8551);transform-origin:0 0;">OUTPUT</div>
<div class="t" style="left:751.50px;top:748.40px;font-size:16.3px;color:#616161;font-family:'Liberation Sans', sans-serif;transform:scaleX(0.8375);transform-origin:0 0;">DEBUG CONSOLE</div>
<div class="t" style="left:905.20px;top:748.40px;font-size:16.3px;color:#3b3b3b;font-family:'Liberation Sans', sans-serif;transform:scaleX(0.8627);transform-origin:0 0;">TERMINAL</div>
<div class="a" style="left:902.2px;top:768.5px;width:77.3px;height:1.6px;background:#005fb8"></div>
<div class="t" style="left:1010.80px;top:748.40px;font-size:16.3px;color:#616161;font-family:'Liberation Sans', sans-serif;transform:scaleX(0.7877);transform-origin:0 0;">PORTS</div>
<div class="badge" style="left:1061px;top:743.3px;width:22.5px;height:22.4px;font-size:14px;line-height:22.4px;font-weight:normal">4</div>
<div class="t" style="left:1114.30px;top:748.40px;font-size:16.3px;color:#616161;font-family:'Liberation Sans', sans-serif;transform:scaleX(0.7933);transform-origin:0 0;">SPELL CHECKER</div>
<div class="badge" style="left:1226.7px;top:743.5px;width:29px;height:22px;font-size:14px;line-height:22px;font-weight:normal">16</div>
<svg style="left:1497px;top:745px;" width="22" height="20" viewBox="0 0 22 20"><rect x="1.2" y="0.8" width="19" height="18" rx="3" fill="none" stroke="#3b3b3b" stroke-width="1.4"/><path d="M10.8 0.8v18" stroke="#3b3b3b" stroke-width="1.4"/></svg>
<svg style="left:1524px;top:751px;" width="13" height="8" viewBox="0 0 13 8"><path d="M1 1.2l5.3 5.3 5.3-5.3" fill="none" stroke="#3b3b3b" stroke-width="1.3"/></svg>
<div class="a" style="left:1554.6px;top:753.3px;width:3px;height:3px;border-radius:50%;background:#3b3b3b"></div>
<div class="a" style="left:1561.3999999999999px;top:753.3px;width:3px;height:3px;border-radius:50%;background:#3b3b3b"></div>
<div class="a" style="left:1568.0px;top:753.3px;width:3px;height:3px;border-radius:50%;background:#3b3b3b"></div>
<div class="a" style="left:1589.5px;top:743.5px;width:1px;height:22px;background:#c8c8c8"></div>
<svg style="left:1608px;top:745px;" width="19" height="19" viewBox="0 0 19 19"><path d="M1.2 6V3.2a2 2 0 0 1 2-2H6 M12 1.2h2.8a2 2 0 0 1 2 2V6 M16.8 12v2.8a2 2 0 0 1-2 2H12 M6 16.8H3.2a2 2 0 0 1-2-2V12" fill="none" stroke="#3b3b3b" stroke-width="1.4"/></svg>
<svg style="left:1646px;top:748px;" width="15" height="14" viewBox="0 0 15 14"><path d="M1.2 1 13.5 13M13.5 1 1.2 13" stroke="#3b3b3b" stroke-width="1.4"/></svg>
<div class="t" style="left:518px;top:807.81px;font-family:'Liberation Mono', monospace;font-size:18px;color:#3b3b3b;transform:scaleX(0.9528);transform-origin:0 0">AB/lab_c/lpf.py</div>
<div class="t" style="left:518px;top:832.08px;font-family:'Liberation Mono', monospace;font-size:18px;color:#3b3b3b;transform:scaleX(0.9528);transform-origin:0 0">Enter frequency in Hz: 1</div>
<div class="t" style="left:518px;top:856.35px;font-family:'Liberation Mono', monospace;font-size:18px;color:#3b3b3b;transform:scaleX(0.9528);transform-origin:0 0">Output voltage magnitude: 5.0 V</div>
<div class="t" style="left:518px;top:880.62px;font-family:'Liberation Mono', monospace;font-size:18px;color:#3b3b3b;transform:scaleX(0.9528);transform-origin:0 0">Output voltage phase: -6.298727142506205e-09 radians</div>
<div class="t" style="left:518px;top:904.89px;font-family:'Liberation Mono', monospace;font-size:18px;color:#3b3b3b;transform:scaleX(0.9528);transform-origin:0 0">(lab-c) <span class="tg">vscode@b4a13c0d48ef</span>:<span class="tb">/workspaces/labs-ALEX-CASSON-LAB/lab_c</span>$ /workspac</div>
<div class="t" style="left:518px;top:929.16px;font-family:'Liberation Mono', monospace;font-size:18px;color:#3b3b3b;transform:scaleX(0.9528);transform-origin:0 0">es/labs-ALEX-CASSON-LAB/lab_c/.venv/bin/python /workspaces/labs-ALEX-CASSON-L</div>
<div class="t" style="left:518px;top:953.43px;font-family:'Liberation Mono', monospace;font-size:18px;color:#3b3b3b;transform:scaleX(0.9528);transform-origin:0 0">AB/lab_c/lpf.py</div>
<div class="t" style="left:518px;top:977.70px;font-family:'Liberation Mono', monospace;font-size:18px;color:#3b3b3b;transform:scaleX(0.9528);transform-origin:0 0">Enter frequency in Hz: 1</div>
<div class="t" style="left:518px;top:1001.97px;font-family:'Liberation Mono', monospace;font-size:18px;color:#3b3b3b;transform:scaleX(0.9528);transform-origin:0 0">Output voltage magnitude: 0.0 dB</div>
<div class="t" style="left:518px;top:1026.24px;font-family:'Liberation Mono', monospace;font-size:18px;color:#3b3b3b;transform:scaleX(0.9528);transform-origin:0 0">Output voltage phase: -6.298727142506205e-09 radians</div>
<div class="t" style="left:518px;top:1050.51px;font-family:'Liberation Mono', monospace;font-size:18px;color:#3b3b3b;transform:scaleX(0.9528);transform-origin:0 0">(lab-c) <span class="tg">vscode@b4a13c0d48ef</span>:<span class="tb">/workspaces/labs-ALEX-CASSON-LAB/lab_c</span>$ ^C</div>
<div class="t" style="left:518px;top:1074.78px;font-family:'Liberation Mono', monospace;font-size:18px;color:#3b3b3b;transform:scaleX(0.9528);transform-origin:0 0">(lab-c) <span class="tg">vscode@b4a13c0d48ef</span>:<span class="tb">/workspaces/labs-ALEX-CASSON-LAB/lab_c</span>$ </div>
<div class="a" style="left:1218px;top:1069.8px;width:10.6px;height:23.5px;border:1.5px solid #005fb8"></div>
<div class="a" style="left:1312px;top:802px;width:1px;height:293px;background:#e8e8e8"></div>
<div class="a" style="left:1312px;top:802px;width:20px;height:1px;background:#e8e8e8"></div>
<div class="a" style="left:1332px;top:778px;width:1px;height:317px;background:#e5e5e5"></div>
<svg style="left:1348px;top:784px;" width="20" height="22" viewBox="0 0 20 22"><path d="M9.5 1 18 5.8v10L9.5 20.5 1 15.8v-10z" fill="none" stroke="#8b6a1f" stroke-width="1" opacity=".55"/><path d="M9.5 10.5 18 5.8v10L9.5 20.5z" fill="#8b6a1f"/><text x="11" y="17" font-size="6" fill="#fff" font-family="Liberation Mono">$</text></svg>
<div class="t" style="left:1374.40px;top:786.06px;font-size:18px;color:#8b6a1f;font-family:'Liberation Sans', sans-serif;transform:scaleX(0.9505);transform-origin:0 0;">bash</div>
<div class="t" style="left:1420.60px;top:787.33px;font-size:16.5px;color:#8b6a1f;font-family:'Liberation Sans', sans-serif;transform:scaleX(0.9076);transform-origin:0 0;">lab_c</div>
<svg style="left:1652px;top:784px;" width="19" height="18" viewBox="0 0 19 18"><path d="M9.5 1.5 18 16.5H1z" fill="none" stroke="#8b6a1f" stroke-width="1.4" stroke-linejoin="round"/><path d="M9.5 6.5v5.5 M9.5 13.5v1.6" stroke="#8b6a1f" stroke-width="1.5"/></svg>
<div class="a" style="left:1332px;top:809.8px;width:352px;height:31px;background:#e4e6f1"></div>
<div class="a" style="left:1332px;top:809.8px;width:2.5px;height:31px;background:#005fb8"></div>
<svg style="left:1348px;top:814px;" width="20" height="22" viewBox="0 0 20 22"><path d="M9.5 1 18 5.8v10L9.5 20.5 1 15.8v-10z" fill="none" stroke="#3b3b3b" stroke-width="1" opacity=".55"/><path d="M9.5 10.5 18 5.8v10L9.5 20.5z" fill="#3b3b3b"/><text x="11" y="17" font-size="6" fill="#fff" font-family="Liberation Mono">$</text></svg>
<div class="t" style="left:1374.40px;top:815.86px;font-size:18px;color:#3b3b3b;font-family:'Liberation Sans', sans-serif;transform:scaleX(0.9921);transform-origin:0 0;">Python</div>
<div class="t" style="left:1439.00px;top:817.13px;font-size:16.5px;color:#616161;font-family:'Liberation Sans', sans-serif;transform:scaleX(0.9152);transform-origin:0 0;">lab_c</div>
<div class="a" style="left:0;top:1095px;width:1686px;height:30px;background:#f8f8f8;border-top:1px solid #e5e5e5"></div>
<div class="a" style="left:3px;top:1095px;width:384px;height:30px;background:#0b5eb6"></div>
<svg style="left:0;top:1090px" width="40" height="35"><path d="M17.8 17 24.2 22.8 17.8 27.7 M30.6 12 25.6 17l5 5.8" transform="translate(0,-0.3)" fill="none" stroke="#fff" stroke-width="1.6"/></svg>
<div class="t" style="left:39.90px;top:1101.78px;font-size:17.5px;color:#ffffff;font-family:'Liberation Sans', sans-serif;transform:scaleX(0.9245);transform-origin:0 0;">Dev Container: EEEN11202 devcontainer @ ...</div>
<svg style="left:401px;top:1098px;" width="22" height="24" viewBox="0 0 22 24"><circle cx="4.5" cy="4.2" r="2.8" fill="none" stroke="#3b3b3b" stroke-width="1.4"/><circle cx="4.5" cy="19.5" r="2.8" fill="none" stroke="#3b3b3b" stroke-width="1.4"/><path d="M4.5 7v9.7 M4.5 15.5a6 6 0 0 1 6-6h1" fill="none" stroke="#3b3b3b" stroke-width="1.4"/><circle cx="15" cy="16.5" r="5.5" fill="#3b3b3b"/><path d="M15 13.5v6 M12.4 15l5.2 3 M12.4 18l5.2-3" stroke="#fff" stroke-width="1.2"/></svg>
<div class="t" style="left:426.80px;top:1101.08px;font-size:17.5px;color:#3b3b3b;font-family:'Liberation Sans', sans-serif;transform:scaleX(0.9476);transform-origin:0 0;">main*</div>
<svg style="left:480px;top:1099px;" width="20" height="22" viewBox="0 0 20 22"><path d="M4 14.5A7 7 0 0 1 14 4.5 M16 7.5A7 7 0 0 1 6 17.5" fill="none" stroke="#3b3b3b" stroke-width="1.4"/><path d="M10.5 2.5 14.5 4.8 12.3 8.5 M9.5 19.5 5.5 17.2 7.7 13.5" fill="none" stroke="#3b3b3b" stroke-width="1.4"/></svg>
<svg style="left:525px;top:1101px;" width="19" height="19" viewBox="0 0 19 19"><circle cx="9.5" cy="9.5" r="8" fill="none" stroke="#3b3b3b" stroke-width="1.4"/><path d="M6.3 6.3l6.4 6.4 M12.7 6.3l-6.4 6.4" stroke="#3b3b3b" stroke-width="1.4"/></svg>
<div class="t" style="left:550.60px;top:1100.68px;font-size:17.5px;color:#3b3b3b;font-family:'Liberation Sans', sans-serif;transform:scaleX(0.8528);transform-origin:0 0;">0</div>
<svg style="left:566px;top:1101px;" width="19" height="18" viewBox="0 0 19 18"><path d="M9.5 1.5 18 16.5H1z" fill="none" stroke="#3b3b3b" stroke-width="1.4" stroke-linejoin="round"/><path d="M9.5 6.5v5.5 M9.5 13.5v1.6" stroke="#3b3b3b" stroke-width="1.5"/></svg>
<div class="t" style="left:591.30px;top:1100.68px;font-size:17.5px;color:#3b3b3b;font-family:'Liberation Sans', sans-serif;transform:scaleX(0.8528);transform-origin:0 0;">0</div>
<svg style="left:606px;top:1101px;" width="19" height="19" viewBox="0 0 19 19"><circle cx="9.5" cy="9.5" r="8" fill="none" stroke="#3b3b3b" stroke-width="1.4"/><path d="M9.5 8v6 M9.5 5v1.6" stroke="#3b3b3b" stroke-width="1.6"/></svg>
<div class="t" style="left:632.90px;top:1100.68px;font-size:17.5px;color:#3b3b3b;font-family:'Liberation Sans', sans-serif;transform:scaleX(0.8579);transform-origin:0 0;">16</div>
<svg style="left:673px;top:1099px;" width="20" height="22" viewBox="0 0 20 22"><path d="M10 9.5 5.5 20.5 M10 9.5l4.5 11 M7 16.5h6" fill="none" stroke="#3b3b3b" stroke-width="1.4"/><circle cx="10" cy="8" r="1.6" fill="#3b3b3b"/><path d="M6.5 4.5a5 5 0 0 0 0 7 M13.5 4.5a5 5 0 0 1 0 7 M4 2a8.5 8.5 0 0 0 0 12 M16 2a8.5 8.5 0 0 1 0 12" fill="none" stroke="#3b3b3b" stroke-width="1.3"/></svg>
<div class="t" style="left:698.90px;top:1100.68px;font-size:17.5px;color:#3b3b3b;font-family:'Liberation Sans', sans-serif;transform:scaleX(0.8939);transform-origin:0 0;">4</div>
<div class="t" style="left:1070.00px;top:1102.28px;font-size:17.5px;color:#3b3b3b;font-family:'Liberation Sans', sans-serif;transform:scaleX(0.9106);transform-origin:0 0;">Ln 36, Col 54</div>
<div class="t" style="left:1188.00px;top:1102.28px;font-size:17.5px;color:#3b3b3b;font-family:'Liberation Sans', sans-serif;transform:scaleX(0.8673);transform-origin:0 0;">Spaces: 4</div>
<div class="t" style="left:1278.70px;top:1102.28px;font-size:17.5px;color:#3b3b3b;font-family:'Liberation Sans', sans-serif;transform:scaleX(0.8854);transform-origin:0 0;">UTF-8</div>
<div class="t" style="left:1345.80px;top:1102.28px;font-size:17.5px;color:#3b3b3b;font-family:'Liberation Sans', sans-serif;transform:scaleX(0.7198);transform-origin:0 0;">LF</div>
<svg style="left:1386px;top:1100px;" width="20" height="22" viewBox="0 0 20 22"><path d="M5 2.5H4a2 2 0 0 0-2 2v4L.8 10 2 11.5v4a2 2 0 0 0 2 2h1 M12 2.5h1a2 2 0 0 1 2 2v4" fill="none" stroke="#3b3b3b" stroke-width="1.3"/><circle cx="14" cy="16" r="4.3" fill="#3b3b3b"/><path d="M12.3 14.3l3.4 3.4 M15.7 14.3l-3.4 3.4" stroke="#fff" stroke-width="1.1"/></svg>
<div class="t" style="left:1415.00px;top:1102.28px;font-size:17.5px;color:#3b3b3b;font-family:'Liberation Sans', sans-serif;transform:scaleX(0.9471);transform-origin:0 0;">Python</div>
<svg style="left:1480px;top:1095px" width="40" height="30"><rect x="11.3" y="5.8" width="9" height="8" rx="3.5" fill="none" stroke="#3b3b3b" stroke-width="2.2"/><rect x="20.7" y="5.8" width="9" height="8" rx="3.5" fill="none" stroke="#3b3b3b" stroke-width="2.2"/><path d="M11 14.5c-1.5.5-2 1.8-2 3 0 3.5 5 6 11.5 6s11.5-2.5 11.5-6c0-1.2-.5-2.5-2-3" fill="none" stroke="#3b3b3b" stroke-width="2.4"/><path d="M11.5 13.8v6 M29.5 13.8v6" stroke="#3b3b3b" stroke-width="2"/><path d="M17.3 16.5v3 M23.7 16.5v3" stroke="#3b3b3b" stroke-width="1.9"/></svg>
<div class="t" style="left:1534.20px;top:1102.28px;font-size:17.5px;color:#3b3b3b;font-family:'Liberation Sans', sans-serif;transform:scaleX(0.9233);transform-origin:0 0;">3.14.0 (lab-c)</div>
<svg style="left:1654px;top:1100px;" width="21" height="20" viewBox="0 0 21 20"><path d="M9.5 3.5A5.5 5.5 0 0 0 4 9v4.5L1.5 17h16L15 13.5V11" fill="none" stroke="#3b3b3b" stroke-width="1.4" stroke-linejoin="round"/><path d="M7.5 17.2 9.5 19.2 11.5 17.2" fill="none" stroke="#3b3b3b" stroke-width="1.3"/><circle cx="15" cy="5" r="3.5" fill="#3b3b3b"/></svg>
</div></div>
<div class="red" style="left:0px;top:188px;width:72px;height:66px"></div>
<div class="red" style="left:90.4px;top:127.3px;width:201.4px;height:47.5px"></div>
<div class="red" style="left:90.4px;top:174.8px;width:417.5px;height:50.9px"></div>
<div class="red" style="left:403px;top:84px;width:45px;height:49.8px"></div>
</body></html>
